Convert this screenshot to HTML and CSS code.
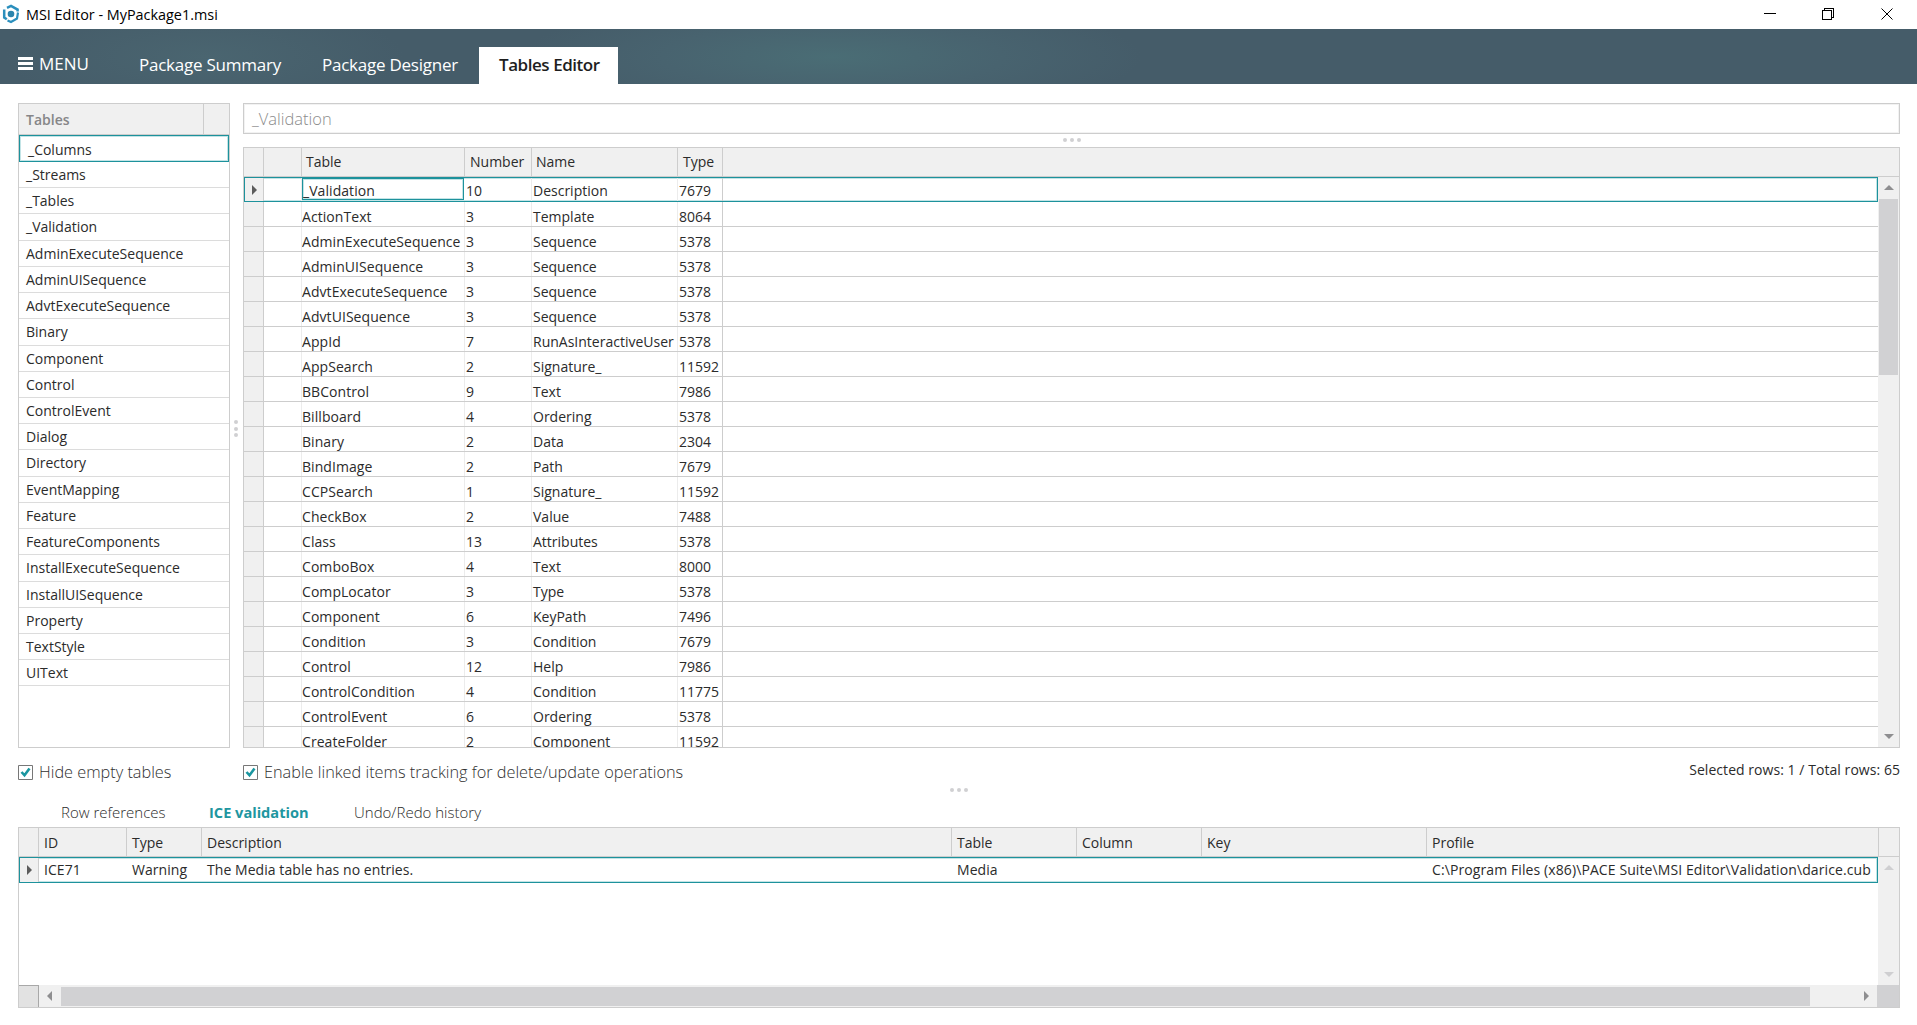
FILE: index.html
```html
<!DOCTYPE html>
<html lang="en">
<head>
<meta charset="utf-8">
<title>MSI Editor - MyPackage1.msi</title>
<link rel="stylesheet" href="styles.css">
</head>
<body>
<header class="titlebar">
  <svg class="logo" viewBox="0 0 18 20" width="18" height="20"><g fill="none" stroke="#2b8fbd" stroke-width="2.500"><path d="M4.800 15.300 2.200 13.500V5.500"/><path d="M5 3.800 9 1.900 15.600 5.600v2"/><path d="M16 8.500 15 14.500 9 18 5.500 16.500" stroke-width="2.200"/></g><circle cx="9" cy="10" r="3.300" fill="#2b84ad"/></svg>
  <span class="title">MSI Editor - MyPackage1.msi</span>
  <svg class="winbtns" viewBox="0 0 130 12" width="130" height="12" fill="none" stroke="#000" shape-rendering="crispEdges"><path d="M0 5.5h12M60.5 2.500V.5h9v9h-2M58.500 2.500h9v9h-9z"/><path d="M117.500.5l11 11m0-11l-11 11" shape-rendering="auto"/></svg>
</header>
<nav class="ribbon">
  <div class="menu"><i class="burger"></i><span>MENU</span></div>
  <span class="tab">Package Summary</span>
  <span class="tab">Package Designer</span>
  <span class="tab active">Tables Editor</span>
</nav>
<main>
  <section class="upper">
    <aside class="tables">
      <div class="tables-head"><b>Tables</b><i></i></div>
      <div class="item selected">_Columns</div>
      <div class="item">_Streams</div>
      <div class="item">_Tables</div>
      <div class="item">_Validation</div>
      <div class="item">AdminExecuteSequence</div>
      <div class="item">AdminUISequence</div>
      <div class="item">AdvtExecuteSequence</div>
      <div class="item">Binary</div>
      <div class="item">Component</div>
      <div class="item">Control</div>
      <div class="item">ControlEvent</div>
      <div class="item">Dialog</div>
      <div class="item">Directory</div>
      <div class="item">EventMapping</div>
      <div class="item">Feature</div>
      <div class="item">FeatureComponents</div>
      <div class="item">InstallExecuteSequence</div>
      <div class="item">InstallUISequence</div>
      <div class="item">Property</div>
      <div class="item">TextStyle</div>
      <div class="item">UIText</div>
    </aside>
    <div class="split-v"><i></i><i></i><i></i></div>
    <div class="editor">
      <div class="search">_Validation</div>
      <div class="split-h top"><i></i><i></i><i></i></div>
      <div class="grid">
        <div class="ghead"><i></i><i></i><span>Table</span><span>Number</span><span>Name</span><span>Type</span></div>
        <div class="gbody">
          <div class="rows">
            <div class="row current"><i></i><i></i><span>_Validation</span><span>10</span><span>Description</span><span>7679</span></div>
            <div class="row"><i></i><i></i><span>ActionText</span><span>3</span><span>Template</span><span>8064</span></div>
            <div class="row"><i></i><i></i><span>AdminExecuteSequence</span><span>3</span><span>Sequence</span><span>5378</span></div>
            <div class="row"><i></i><i></i><span>AdminUISequence</span><span>3</span><span>Sequence</span><span>5378</span></div>
            <div class="row"><i></i><i></i><span>AdvtExecuteSequence</span><span>3</span><span>Sequence</span><span>5378</span></div>
            <div class="row"><i></i><i></i><span>AdvtUISequence</span><span>3</span><span>Sequence</span><span>5378</span></div>
            <div class="row"><i></i><i></i><span>AppId</span><span>7</span><span>RunAsInteractiveUser</span><span>5378</span></div>
            <div class="row"><i></i><i></i><span>AppSearch</span><span>2</span><span>Signature_</span><span>11592</span></div>
            <div class="row"><i></i><i></i><span>BBControl</span><span>9</span><span>Text</span><span>7986</span></div>
            <div class="row"><i></i><i></i><span>Billboard</span><span>4</span><span>Ordering</span><span>5378</span></div>
            <div class="row"><i></i><i></i><span>Binary</span><span>2</span><span>Data</span><span>2304</span></div>
            <div class="row"><i></i><i></i><span>BindImage</span><span>2</span><span>Path</span><span>7679</span></div>
            <div class="row"><i></i><i></i><span>CCPSearch</span><span>1</span><span>Signature_</span><span>11592</span></div>
            <div class="row"><i></i><i></i><span>CheckBox</span><span>2</span><span>Value</span><span>7488</span></div>
            <div class="row"><i></i><i></i><span>Class</span><span>13</span><span>Attributes</span><span>5378</span></div>
            <div class="row"><i></i><i></i><span>ComboBox</span><span>4</span><span>Text</span><span>8000</span></div>
            <div class="row"><i></i><i></i><span>CompLocator</span><span>3</span><span>Type</span><span>5378</span></div>
            <div class="row"><i></i><i></i><span>Component</span><span>6</span><span>KeyPath</span><span>7496</span></div>
            <div class="row"><i></i><i></i><span>Condition</span><span>3</span><span>Condition</span><span>7679</span></div>
            <div class="row"><i></i><i></i><span>Control</span><span>12</span><span>Help</span><span>7986</span></div>
            <div class="row"><i></i><i></i><span>ControlCondition</span><span>4</span><span>Condition</span><span>11775</span></div>
            <div class="row"><i></i><i></i><span>ControlEvent</span><span>6</span><span>Ordering</span><span>5378</span></div>
            <div class="row"><i></i><i></i><span>CreateFolder</span><span>2</span><span>Component</span><span>11592</span></div>
          </div>
          <div class="vscroll"><i class="up"></i><i class="thumb"></i><i class="down"></i></div>
        </div>
      </div>
    </div>
  </section>
  <section class="options">
    <label class="check hide"><svg width="15" height="15" viewBox="0 0 15 15"><path d="M.5.5h14v14H.5z" fill="#fff" stroke="#777"/><path d="M3.500 7l3 3.300 5-6.800" fill="none" stroke="#1a96a0" stroke-width="2.600"/></svg><span>Hide empty tables</span></label>
    <label class="check link"><svg width="15" height="15" viewBox="0 0 15 15"><path d="M.5.5h14v14H.5z" fill="#fff" stroke="#777"/><path d="M3.500 7l3 3.300 5-6.800" fill="none" stroke="#1a96a0" stroke-width="2.600"/></svg><span>Enable linked items tracking for delete/update operations</span></label>
    <span class="count">Selected rows: 1 / Total rows: 65</span>
  </section>
  <div class="split-h mid"><i></i><i></i><i></i></div>
  <div class="subtabs"><span class="refs">Row references</span><span class="ice">ICE validation</span><span class="undo">Undo/Redo history</span></div>
  <section class="ice-grid">
    <div class="irow ihead"><i></i><span>ID</span><span>Type</span><span>Description</span><span>Table</span><span>Column</span><span>Key</span><span>Profile</span><i></i></div>
    <div class="ibody">
      <div class="ilist">
        <div class="irow icur"><i></i><span>ICE71</span><span>Warning</span><span>The Media table has no entries.</span><span>Media</span><span></span><span></span><span class="path">C:\Program Files (x86)\PACE Suite\MSI Editor\Validation\darice.cub</span></div>
      </div>
      <div class="vscroll off"><i class="up"></i><i class="down"></i></div>
    </div>
    <div class="hscroll"><i class="stub"></i><i class="left"></i><i class="hthumb"></i><i class="right"></i><i class="corner"></i></div>
  </section>
</main>
</body>
</html>
```
FILE: styles.css
```css
* { box-sizing: border-box; }
body {
  margin: 0;
  width: 1917px;
  height: 1025px;
  overflow: hidden;
  background: #fff;
  color: #2b2b2b;
  font: 14px/20px "Open Sans", "Noto Sans", sans-serif;
  white-space: nowrap;
}
i { display: block; }

/* window chrome */
.titlebar { height: 29px; display: flex; align-items: flex-start; color: #000; }
.logo { margin: 4px 0 0 2px; }
.title { margin: 5px 0 0 6px; font-size: 14.400px; }
.winbtns { margin: 8px 23px 0 auto; }

.ribbon {
  height: 55px;
  display: flex;
  color: #fff;
  font-size: 17px;
  line-height: 36px;
  padding-top: 18px;
  background:
    radial-gradient(ellipse 310px 60px at 832px 28px, #4a6d75, #48636f 55%, transparent),
    radial-gradient(ellipse 200px 55px at 205px 28px, #4a6570, transparent),
    #455c69;
}
.menu { width: 121px; padding-left: 18px; display: flex; gap: 6px; line-height: 33px; }
.burger { width: 15px; height: 13px; margin-top: 10px; background: linear-gradient(#fff 3px, transparent 3px 5px, #fff 5px 8px, transparent 8px 10px, #fff 10px); }
.tab { padding: 0 18px; width: 182px; letter-spacing: -.24px; }
.tab + .tab { width: 176px; padding-left: 19px; }
.tab.tab.active { width: 139px; padding: 0 0 0 20px; background: #fff; color: #1e1e1e; font-weight: 600; letter-spacing: -.45px; }

main { padding: 19px 17px 0 18px; }
.upper { display: flex; height: 645px; }

/* table list */
.tables { width: 212px; border: 1px solid #cdcdcd; display: flex; flex-direction: column; }
.tables-head { height: 31px; flex: none; display: flex; background: #f0f0f0; border-bottom: 1px solid #cdcdcd; color: #868688; line-height: 32px; padding-left: 7px; }
.tables-head b { font-weight: 600; flex: 1; }
.tables-head i { width: 26px; border-left: 1px solid #cdcdcd; }
.item { height: 26.23px; flex: none; padding-left: 7px; line-height: 25px; border-bottom: 1px solid #dcdcdc; }
.item.selected { height: 27px; border: 1px solid #1d929c; box-shadow: inset 0 0 0 1px #c3e4e6; line-height: 27px; padding-left: 8px; }

/* splitters */
.split-v { width: 12px; margin-right: 1px; display: flex; flex-direction: column; align-items: center; gap: 2.500px; padding-top: 317px; }
.split-h { display: flex; justify-content: center; gap: 3px; }
.split-v i, .split-h i { width: 4px; height: 4px; border-radius: 2px; background: #d0d0d2; }
.split-h.top { height: 13px; padding-top: 4px; }
.split-h.mid { height: 14px; }

.editor { width: 1657px; display: flex; flex-direction: column; }
.search { height: 31px; border: 1px solid #cdcdcd; box-shadow: inset 0 0 0 1px #f2f2f2; color: #8c8c8c; font-size: 16.500px; font-weight: 300; line-height: 29px; padding-left: 8px; }

/* records grid */
.grid { flex: 1; min-height: 0; border: 1px solid #cdcdcd; display: flex; flex-direction: column; }
.ghead, .row { display: grid; grid-template-columns: 20px 38px 163px 67px 146px 45px 1fr; }
.ghead { height: 29px; flex: none; background: #f0f0f0; border-bottom: 1px solid #cdcdcd; line-height: 28px; }
.ghead > * { border-right: 1px solid #cdcdcd; padding-left: 4px; }
.ghead span:nth-child(4), .ghead span:nth-child(n+6) { padding-left: 5px; }
.gbody { flex: 1; min-height: 0; display: flex; overflow: hidden; }
.rows { flex: 1; }
.row { height: 25px; border-bottom: 1px solid #cdcdcd; line-height: 29px; }
.row > * { border-right: 1px solid #ececec; height: 24px; overflow: hidden; }
.row > span { padding-left: 1px; }
.row > span:nth-child(3) { padding-left: 0; letter-spacing: .06px; }
.row > i:first-child { background: #f0f0f0; border-color: #cdcdcd; }
.row > span:last-child { border-color: #cdcdcd; }
.row.current { border: 1px solid #1d929c; box-shadow: inset 0 0 0 1px #c3e4e6; grid-template-columns: 19px 38px 163px 67px 146px 45px 1fr; line-height: 26px; }
.row.current > * { height: 23px; }
.row.current > i:first-child, .icur > i:first-child { display: flex; align-items: center; justify-content: center; }
.row.current > i:first-child::before, .icur > i:first-child::before { content: ""; border: 5px solid transparent; border-left-color: #5c5c5c; border-right: 0; }
.row.current > span:nth-child(3) { border: 1px solid #1d929c; box-shadow: inset 0 0 0 1px #c3e4e6; height: 22px; line-height: 24px; margin-right: 1px; }

/* scroll bars */
.vscroll { width: 21px; background: #f0f0f0; display: flex; flex-direction: column; align-items: center; }
.up, .down { border: 5px solid transparent; width: 0; }
.up { border-bottom-color: #8e8e90; border-top: 0; margin-top: 8px; }
.down { border-top-color: #8e8e90; border-bottom: 0; margin: auto 0 8px; }
.thumb { width: 19px; height: 176px; background: #d1d1d3; margin-top: 9px; }
.off .up { border-bottom-color: #cfcfd1; }
.off .down { border-top-color: #cfcfd1; }

/* option row */
.options { display: flex; height: 40px; padding-top: 17px; }
.check { display: flex; gap: 6px; font-size: 16.300px; font-weight: 300; line-height: 15px; color: #303030; }
.hide { width: 225px; }
.count { margin-left: auto; line-height: 10px; letter-spacing: .05px; }

.subtabs { display: flex; height: 25px; padding-left: 43px; font-size: 15px; line-height: 20px; font-weight: 300; }
.refs { width: 148px; }
.ice { width: 145px; font-weight: 700; font-size: 14.600px; color: #1e96a0; }

/* validation grid */
.ice-grid { height: 181px; border: 1px solid #cdcdcd; display: flex; flex-direction: column; }
.irow { display: grid; grid-template-columns: 20px 88px 75px 750px 125px 125px 225px 452px 1fr; }
.ihead { height: 29px; background: #f0f0f0; border-bottom: 1px solid #cdcdcd; line-height: 29px; }
.ihead > * { border-right: 1px solid #cdcdcd; }
.ihead > :last-child { border: 0; }
.irow > span { padding-left: 5px; }
.ibody { flex: 1; display: flex; }
.ilist { width: 1859px; }
.icur { height: 26px; grid-template-columns: 19px 88px 75px 750px 125px 125px 225px 1fr; border: 1px solid #1d929c; box-shadow: inset 0 0 0 1px #c3e4e6; line-height: 24px; letter-spacing: .06px; }
.icur > .path { letter-spacing: .1px; }
.icur > i { background: #f0f0f0; border-right: 1px solid #cdcdcd; }
.hscroll { height: 22px; display: flex; align-items: center; background: #f0f0f0; }
.stub { width: 20px; height: 22px; background: #e2e2e2; border: 1px solid #a8a8a8; border-width: 1px 1px 0 0; }
.left, .right { height: 0; border: 5px solid transparent; }
.left { border-right-color: #8e8e90; border-left: 0; margin-left: 8px; }
.hthumb { width: 1749px; height: 19px; margin-left: 9px; background: #d1d1d3; }
.right { border-left-color: #8e8e90; border-right: 0; margin-left: auto; }
.corner { width: 22px; height: 22px; background: #d1d1d3; margin-left: 8px; }
```
